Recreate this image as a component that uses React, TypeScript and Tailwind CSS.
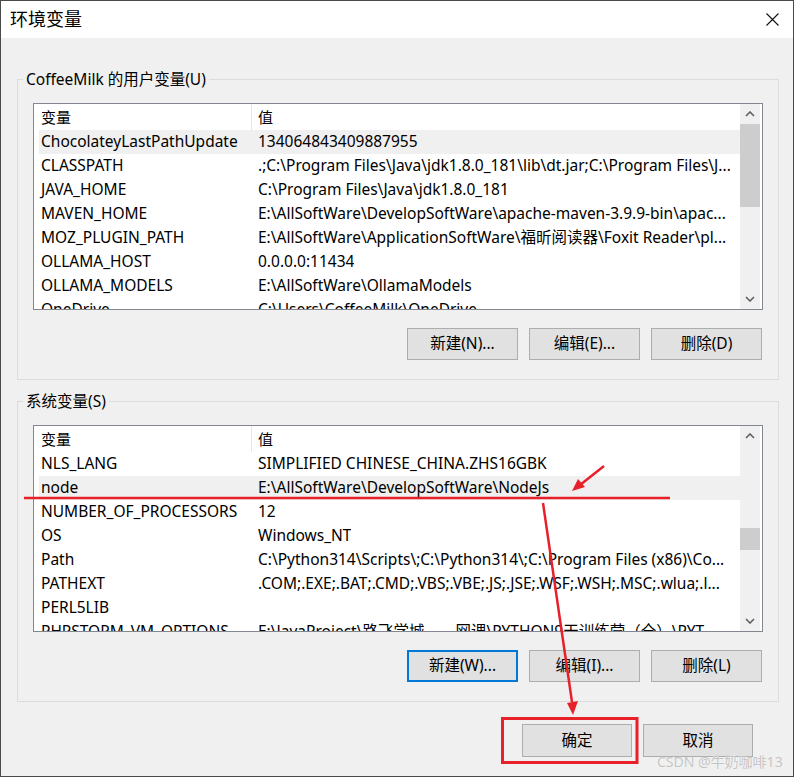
import type { ReactNode } from "react";

const userVars: [string, string][] = [
  ["ChocolateyLastPathUpdate", "134064843409887955"],
  ["CLASSPATH", ".;C:\\Program Files\\Java\\jdk1.8.0_181\\lib\\dt.jar;C:\\Program Files\\J..."],
  ["JAVA_HOME", "C:\\Program Files\\Java\\jdk1.8.0_181"],
  ["MAVEN_HOME", "E:\\AllSoftWare\\DevelopSoftWare\\apache-maven-3.9.9-bin\\apac..."],
  ["MOZ_PLUGIN_PATH", "E:\\AllSoftWare\\ApplicationSoftWare\\福昕阅读器\\Foxit Reader\\pl..."],
  ["OLLAMA_HOST", "0.0.0.0:11434"],
  ["OLLAMA_MODELS", "E:\\AllSoftWare\\OllamaModels"],
  ["OneDrive", "C:\\Users\\CoffeeMilk\\OneDrive"],
];

const sysVars: [string, string][] = [
  ["NLS_LANG", "SIMPLIFIED CHINESE_CHINA.ZHS16GBK"],
  ["node", "E:\\AllSoftWare\\DevelopSoftWare\\NodeJs"],
  ["NUMBER_OF_PROCESSORS", "12"],
  ["OS", "Windows_NT"],
  ["Path", "C:\\Python314\\Scripts\\;C:\\Python314\\;C:\\Program Files (x86)\\Co..."],
  ["PATHEXT", ".COM;.EXE;.BAT;.CMD;.VBS;.VBE;.JS;.JSE;.WSF;.WSH;.MSC;.wlua;.l..."],
  ["PERL5LIB", ""],
  ["PHPSTORM_VM_OPTIONS", "E:\\JavaProject\\路飞学城——网课\\PYTHON9天训练营（全）\\PYT..."],
];

const Chevron = ({ down }: { down?: boolean }) => (
  <svg width="10" height="6" viewBox="0 0 10 6">
    <path
      d={down ? "M1 1 L5 5 L9 1" : "M1 5 L5 1 L9 5"}
      stroke="#606060"
      strokeWidth="1.6"
      fill="none"
    />
  </svg>
);

const ScrollBar = ({ thumb }: { thumb: string }) => (
  <div className="flex w-[20px] flex-col bg-[#f0f0f0]">
    <div className="flex h-[20px] items-center justify-center">
      <Chevron />
    </div>
    <div className="flex flex-1 flex-col">
      <div className={`bg-[#cdcdcd] ${thumb}`} />
    </div>
    <div className="flex h-[20px] items-center justify-center">
      <Chevron down />
    </div>
  </div>
);

const VarList = ({
  rows,
  active,
  thumb,
}: {
  rows: [string, string][];
  active: number;
  thumb: string;
}) => (
  <div className="flex h-[207px] w-[730px] border border-[#828790] bg-white pr-[2px]">
    <div className="flex w-[706px] flex-col overflow-hidden">
      <div className="flex h-[26px] shrink-0 text-[15px]">
        <div className="flex h-full w-[218px] items-center border-r border-[#e5e5e5] pl-[7px]">变量</div>
        <div className="flex items-center pl-[6px]">值</div>
      </div>
      <div className="pl-[5px] text-[15.5px]">
        {rows.map(([k, v], i) => (
          <div
            key={k}
            className={`flex h-[24px] items-center whitespace-nowrap ${i === active ? "bg-[#f0f0f0]" : ""}`}
          >
            <span className="w-[219px] shrink-0 pl-[2px]">{k}</span>
            <span className="overflow-hidden">{v}</span>
          </div>
        ))}
      </div>
    </div>
    <ScrollBar thumb={thumb} />
  </div>
);

const Btn = ({ children, focus }: { children: ReactNode; focus?: boolean }) => (
  <button
    className={`flex h-[32px] w-[111px] items-center justify-center bg-[#e1e1e1] text-[15.5px] ${
      focus ? "border-2 border-[#0078d7]" : "border border-[#adadad]"
    }`}
  >
    {children}
  </button>
);

const Group = ({ title, children }: { title: string; children: ReactNode }) => (
  <fieldset className="ml-[16px] w-[762px] border border-[#dcdcdc] px-[15px] pt-[14px] pb-[19px]">
    <legend className="-ml-[10px] px-[3px] text-[15.5px] leading-[20px]">{title}</legend>
    {children}
  </fieldset>
);

export default function App() {
  return (
    <div className="relative flex h-[777px] w-[794px] flex-col border border-[#4a4a4a] bg-[#f0f0f0] font-['Noto_Sans','Noto_Sans_CJK_SC',sans-serif] text-[15px] text-black">
      <div className="flex h-[37px] shrink-0 items-center justify-between bg-white pl-[9px] pr-[14px]">
        <span className="text-[18px]">环境变量</span>
        <svg width="13" height="13" viewBox="0 0 13 13">
          <path d="M0.5 0.5 L12.5 12.5 M12.5 0.5 L0.5 12.5" stroke="#111" strokeWidth="1.1" />
        </svg>
      </div>

      <div className="mt-[31px]">
        <Group title="CoffeeMilk 的用户变量(U)">
          <VarList rows={userVars} active={0} thumb="h-[83px]" />
          <div className="mt-[18px] mr-[1px] flex justify-end gap-[11px]">
            <Btn>新建(N)...</Btn>
            <Btn>编辑(E)...</Btn>
            <Btn>删除(D)</Btn>
          </div>
        </Group>
      </div>

      <div className="mt-[11px]">
        <Group title="系统变量(S)">
          <VarList rows={sysVars} active={1} thumb="mt-[82px] h-[22px]" />
          <div className="mt-[18px] mr-[1px] flex justify-end gap-[11px]">
            <Btn focus>新建(W)...</Btn>
            <Btn>编辑(I)...</Btn>
            <Btn>删除(L)</Btn>
          </div>
        </Group>
      </div>

      <div className="mt-[22px] flex justify-end gap-[11px] pr-[40px] text-[15.5px]">
        <button className="flex h-[33px] w-[110px] items-center justify-center border border-[#adadad] bg-[#e1e1e1]">确定</button>
        <button className="flex h-[33px] w-[110px] items-center justify-center border border-[#adadad] bg-[#e1e1e1]">取消</button>
      </div>

      <svg
        className="pointer-events-none absolute top-[-1px] left-[-1px]"
        width="794"
        height="777"
        viewBox="0 0 794 777"
      >
        <line x1="24" y1="498" x2="670" y2="498" stroke="#e8202a" strokeWidth="2.5" />
        <line x1="604" y1="466" x2="580" y2="485" stroke="#e8202a" strokeWidth="2.5" />
        <polygon points="572,491 585,487 578,479" fill="#e8202a" />
        <line x1="543" y1="503" x2="572" y2="702" stroke="#e8202a" strokeWidth="2.5" />
        <polygon points="573,715 578,701 567,703" fill="#e8202a" />
        <rect x="502.5" y="718.5" width="134.5" height="44" fill="none" stroke="#e8202a" strokeWidth="3" />
      </svg>

      <span className="absolute bottom-[4px] left-[656px] text-[14px] text-[#c4c4c4] [text-shadow:0_0_1px_#fff]">
        CSDN @牛奶咖啡13
      </span>
    </div>
  );
}
